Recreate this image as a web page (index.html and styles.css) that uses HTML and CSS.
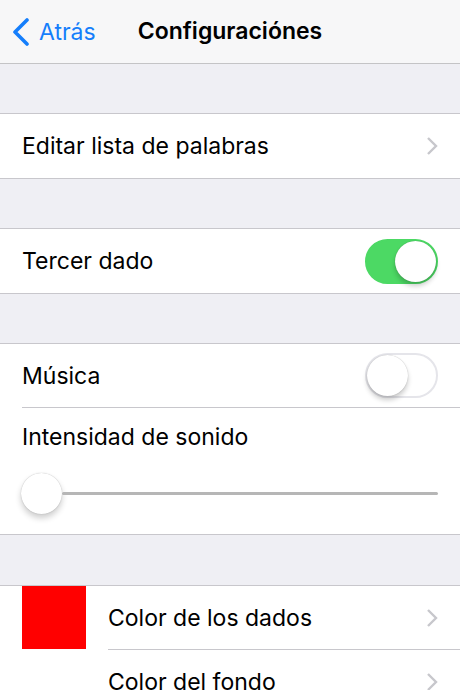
FILE: index.html
```html
<!DOCTYPE html>
<html lang="es">

<head>
    <title>Configuraciónes</title>

    <link rel="stylesheet" href="styles.css">
</head>

<body>
    <div class="navbar">
        <div class="navbar__back">
            <svg class="navbar__chevron" width="20" height="28" viewBox="0 0 20 28">
                <path d="M16 2 L4 14 L16 26" fill="none" stroke="#157efb" stroke-width="3.6" stroke-linecap="round" stroke-linejoin="round" />
            </svg>
            <span>Atrás</span>
        </div>
        <div class="navbar__title">Configuraciónes</div>
    </div>

    <div class="spacer"></div>

    <div class="group">
        <div class="row">
            <span class="row__label">Editar lista de palabras</span>
            <svg class="disclosure" width="12" height="20" viewBox="0 0 12 20">
                <path d="M2 2 L10 10 L2 18" fill="none" stroke="#c7c7cc" stroke-width="2.4" />
            </svg>
        </div>
    </div>

    <div class="spacer"></div>

    <div class="group">
        <div class="row">
            <span class="row__label">Tercer dado</span>
            <div class="switch switch--on"><div class="switch__thumb"></div></div>
        </div>
    </div>

    <div class="spacer"></div>

    <div class="group">
        <div class="row row--inset">
            <span class="row__label">Música</span>
            <div class="switch"><div class="switch__thumb"></div></div>
        </div>
        <div class="row row--tall">
            <span class="row__label">Intensidad de sonido</span>
            <div class="slider">
                <div class="slider__thumb"></div>
                <div class="slider__track"></div>
            </div>
        </div>
    </div>

    <div class="spacer spacer--wide"></div>

    <div class="group group--colors">
        <div class="color-row">
            <div class="swatch"></div>
            <div class="row row--inset row--flush">
                <span class="row__label">Color de los dados</span>
                <svg class="disclosure" width="12" height="20" viewBox="0 0 12 20">
                    <path d="M2 2 L10 10 L2 18" fill="none" stroke="#c7c7cc" stroke-width="2.4" />
                </svg>
            </div>
        </div>
        <div class="color-row">
            <div class="swatch swatch--empty"></div>
            <div class="row row--flush">
                <span class="row__label">Color del fondo</span>
                <svg class="disclosure" width="12" height="20" viewBox="0 0 12 20">
                    <path d="M2 2 L10 10 L2 18" fill="none" stroke="#c7c7cc" stroke-width="2.4" />
                </svg>
            </div>
        </div>
    </div>
</body>

</html>
```

FILE: styles.css
```css
* {
    padding: 0;
    margin: 0;
    box-sizing: border-box;
}

body {
    background: #efeff4;
    font-family: "Inter", "Roboto", sans-serif;
    color: #000;
    overflow: hidden;
}

.navbar {
    height: 64px;
    background: #f7f7f8;
    border-bottom: 1px solid #c4c4c6;
    display: flex;
    align-items: center;
    justify-content: center;
    position: relative;
}

.navbar__back {
    position: absolute;
    left: 11px;
    top: 18px;
    display: flex;
    align-items: center;
    gap: 8px;
    color: #157efb;
    font-size: 23px;
}

.navbar__title {
    font-size: 23px;
    font-weight: 600;
    padding-bottom: 2px;
}

.spacer {
    height: 49px;
}

.spacer--wide {
    height: 50px;
}

.group {
    background: #fff;
    border-top: 1px solid #c8c7cc;
    border-bottom: 1px solid #c8c7cc;
}

.row {
    height: 64px;
    margin-left: 22px;
    padding-right: 22px;
    display: flex;
    align-items: center;
    justify-content: space-between;
}

.row--inset {
    border-bottom: 1px solid #c8c7cc;
    height: 64px;
}

.row__label {
    font-size: 23px;
}

.row--tall {
    height: 126px;
    flex-direction: column;
    align-items: stretch;
    justify-content: flex-start;
    padding-top: 15px;
}

.switch {
    width: 73px;
    height: 45px;
    border-radius: 23px;
    border: 2px solid #e5e5ea;
    background: #fff;
    position: relative;
}

.switch__thumb {
    position: absolute;
    top: 0;
    left: 0;
    width: 41px;
    height: 41px;
    border-radius: 50%;
    background: #fff;
    box-shadow: 0 4px 5px rgba(0, 0, 0, 0.2), 0 0 1px rgba(0, 0, 0, 0.3);
}

.switch--on {
    background: #4cd964;
    border-color: #4cd964;
}

.switch--on .switch__thumb {
    left: auto;
    right: 0;
}

.slider {
    margin-top: 21px;
    height: 42px;
    display: flex;
    align-items: center;
    margin-left: -1px;
}

.slider__thumb {
    width: 41px;
    height: 41px;
    flex: none;
    border-radius: 50%;
    background: #fff;
    box-shadow: 0 4px 6px rgba(0, 0, 0, 0.2), 0 0 1px rgba(0, 0, 0, 0.3);
}

.slider__track {
    flex: 1;
    height: 3px;
    border-radius: 2px;
    background: #b6b6b6;
}

.group--colors {
    border-bottom: none;
}

.color-row {
    display: flex;
    align-items: stretch;
    padding-left: 22px;
}

.swatch {
    width: 64px;
    height: 63px;
    background: #ff0000;
    flex: none;
}

.swatch--empty {
    background: transparent;
}

.row--flush {
    flex: 1;
    margin-left: 22px;
    height: 64px;
}
```
